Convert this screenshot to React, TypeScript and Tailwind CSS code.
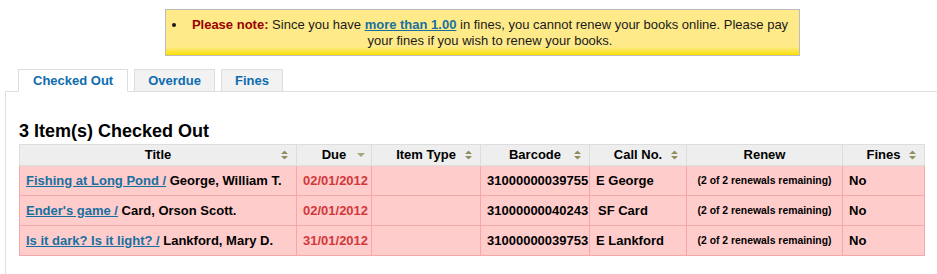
import React from "react";

const SortBoth = () => (
  <svg
    width="7"
    height="9"
    viewBox="0 0 7 9"
    className="absolute right-[8px] top-1/2 -translate-y-1/2"
  >
    <path d="M0 3.5 L3.5 0 L7 3.5 Z M0 5.5 L7 5.5 L3.5 9 Z" fill="#8e8e5e" />
  </svg>
);

const SortDown = () => (
  <svg
    width="8"
    height="4"
    viewBox="0 0 8 4"
    className="absolute right-[6px] top-1/2 -translate-y-1/2"
  >
    <path d="M0 0 L8 0 L4 4 Z" fill="#a6a67c" />
  </svg>
);

const rows = [
  {
    title: "Fishing at Long Pond /",
    author: "George, William T.",
    due: "02/01/2012",
    barcode: "31000000039755",
    call: "E George",
    callPad: false,
  },
  {
    title: "Ender's game /",
    author: "Card, Orson Scott.",
    due: "02/01/2012",
    barcode: "31000000040243",
    call: "SF Card",
    callPad: true,
  },
  {
    title: "Is it dark? Is it light? /",
    author: "Lankford, Mary D.",
    due: "31/01/2012",
    barcode: "31000000039753",
    call: "E Lankford",
    callPad: false,
  },
];

export default function App() {
  return (
    <div
      className="min-h-[274px] bg-white text-black"
      style={{ fontFamily: '"Liberation Sans", Arial, sans-serif' }}
    >
      <div className="pt-[9px]">
        <div className="ml-[165px] w-[635px] h-[47px] border border-[#bcbcbc] bg-[linear-gradient(to_bottom,#ffea8a_0%,#ffea8a_82%,#ffdf00_100%)] pt-[7px] text-[13px] leading-[16px] text-[#1a1a1a]">
          <ul className="pl-[21px] pr-[6px]">
            <li className="list-disc text-center">
              <span className="font-bold text-[#990000]">Please note:</span>{" "}
              Since you have{" "}
              <a className="font-bold underline text-[#17709f]" href="#">
                more than 1.00
              </a>{" "}
              in fines, you cannot renew your books online. Please pay your
              fines if you wish to renew your books.
            </li>
          </ul>
        </div>
      </div>

      <div className="mt-[13px]">
        <ul className="relative z-10 flex ml-[18px] -mb-px gap-[6px]">
          <li className="h-[23px] border border-[#dddddd] border-b-white bg-white px-[14px] text-[13px] font-bold leading-[21px] text-[#0e6cae]">
            Checked Out
          </li>
          <li className="h-[23px] border border-[#dddddd] bg-[#f2f2f2] px-[13px] text-[13px] font-bold leading-[21px] text-[#0e6cae]">
            Overdue
          </li>
          <li className="h-[23px] border border-[#dddddd] bg-[#f2f2f2] px-[13px] text-[13px] font-bold leading-[21px] text-[#0e6cae]">
            Fines
          </li>
        </ul>
        <div className="ml-[5px] border-l border-t border-[#e0e0e0] pl-[13px] pb-[30px]">
          <h2 className="mt-[29px] mb-[2px] text-[18px] font-bold leading-[21px]">
            3 Item(s) Checked Out
          </h2>
          <table className="table-fixed border-collapse w-[905px] text-[13px] font-bold">
            <colgroup>
              <col className="w-[277px]" />
              <col className="w-[75px]" />
              <col className="w-[109px]" />
              <col className="w-[109px]" />
              <col className="w-[97px]" />
              <col className="w-[156px]" />
              <col className="w-[82px]" />
            </colgroup>
            <thead>
              <tr className="h-[21px] bg-[#eeeeee]">
                <th className="relative border border-[#dddddd] text-center font-bold">
                  Title
                  <SortBoth />
                </th>
                <th className="relative border border-[#dddddd] text-center font-bold">
                  Due
                  <SortDown />
                </th>
                <th className="relative border border-[#dddddd] text-center font-bold">
                  Item Type
                  <SortBoth />
                </th>
                <th className="relative border border-[#dddddd] text-center font-bold">
                  Barcode
                  <SortBoth />
                </th>
                <th className="relative border border-[#dddddd] text-center font-bold">
                  Call No.
                  <SortBoth />
                </th>
                <th className="relative border border-[#dddddd] text-center font-bold">
                  Renew
                </th>
                <th className="relative border border-[#dddddd] text-center font-bold">
                  Fines
                  <SortBoth />
                </th>
              </tr>
            </thead>
            <tbody>
              {rows.map((r) => (
                <tr key={r.barcode} className="h-[30px] bg-[#ffcccc]">
                  <td className="border border-[#f4a9a9] px-[6px] whitespace-nowrap">
                    <a href="#" className="underline text-[#17709f]">
                      {r.title}
                    </a>{" "}
                    {r.author}
                  </td>
                  <td className="border border-[#f4a9a9] px-[6px] text-[#d2383a]">
                    {r.due}
                  </td>
                  <td className="border border-[#f4a9a9] px-[6px]"></td>
                  <td className="border border-[#f4a9a9] px-[6px]">
                    {r.barcode}
                  </td>
                  <td className="border border-[#f4a9a9] px-[6px]">
                    <span className={r.callPad ? "ml-[2px]" : ""}>{r.call}</span>
                  </td>
                  <td className="border border-[#f4a9a9] px-[6px] text-center text-[10.4px]">
                    (2 of 2 renewals remaining)
                  </td>
                  <td className="border border-[#f4a9a9] px-[6px]">No</td>
                </tr>
              ))}
            </tbody>
          </table>
        </div>
      </div>
    </div>
  );
}
